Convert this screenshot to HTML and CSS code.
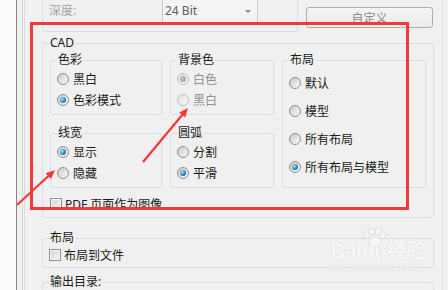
FILE: index.html
```html
<!DOCTYPE html>
<html lang="zh-CN">

  <head>
    <meta charset="UTF-8">
    <meta name="viewport" content="width=device-width, initial-scale=1.0">
    <title>输出选项</title>
    <link rel="stylesheet" href="styles.css">
  </head>

  <body>
    <div class="side"></div>

    <div class="content">
      <div class="frame">
        <div class="top-row">
          <div class="depth-box">
            <span class="depth-label">深度:</span>
            <div class="select">
              <span>24 Bit</span>
              <span class="caret"></span>
            </div>
          </div>
          <button class="btn" disabled>自定义</button>
        </div>

        <fieldset class="group cad">
          <legend>CAD</legend>
          <div class="cad-grid">
            <fieldset class="group">
              <legend>色彩</legend>
              <label class="opt"><span class="radio"></span>黑白</label>
              <label class="opt"><span class="radio on"></span>色彩模式</label>
            </fieldset>

            <fieldset class="group">
              <legend>背景色</legend>
              <label class="opt disabled"><span class="radio on"></span>白色</label>
              <label class="opt disabled"><span class="radio"></span>黑白</label>
            </fieldset>

            <fieldset class="group layout">
              <legend>布局</legend>
              <label class="opt tall"><span class="radio"></span>默认</label>
              <label class="opt tall"><span class="radio"></span>模型</label>
              <label class="opt tall"><span class="radio"></span>所有布局</label>
              <label class="opt tall"><span class="radio on"></span>所有布局与模型</label>
            </fieldset>

            <fieldset class="group">
              <legend>线宽</legend>
              <label class="opt"><span class="radio on"></span>显示</label>
              <label class="opt"><span class="radio"></span>隐藏</label>
            </fieldset>

            <fieldset class="group">
              <legend>圆弧</legend>
              <label class="opt"><span class="radio"></span>分割</label>
              <label class="opt"><span class="radio on"></span>平滑</label>
            </fieldset>
          </div>

          <label class="opt check-row"><span class="check"></span>PDF 页面作为图像</label>
        </fieldset>

        <fieldset class="group sheet">
          <legend>布局</legend>
          <label class="opt check-row"><span class="check"></span>布局到文件</label>
        </fieldset>

        <fieldset class="group output">
          <legend>输出目录:</legend>
        </fieldset>
      </div>
    </div>

    <!-- watermark of the source site -->
    <div class="watermark">
      <svg class="paw" width="26" height="20" viewBox="0 0 26 20">
        <ellipse cx="6" cy="7" rx="3" ry="3.5"/>
        <ellipse cx="11" cy="3.5" rx="3" ry="3.5"/>
        <ellipse cx="17" cy="3.5" rx="3" ry="3.5"/>
        <ellipse cx="22" cy="7" rx="3" ry="3.5"/>
        <ellipse cx="14" cy="14" rx="6" ry="5"/>
      </svg>
      <div class="wm-logo">Baidu经验</div>
      <div class="wm-url">jingyan.baidu.com</div>
    </div>

    <!-- red annotation drawn over the dialog -->
    <svg class="marks" width="448" height="290" viewBox="0 0 448 290">
      <rect x="31.5" y="23.5" width="376" height="185" fill="none" stroke="#f03a3a" stroke-width="3"/>
      <line x1="17" y1="205" x2="49" y2="175.5" stroke="#f03a3a" stroke-width="2.2"/>
      <polygon points="55,170 51.1,179 45.7,173.2" fill="#f03a3a"/>
      <line x1="143" y1="162" x2="183" y2="114" stroke="#f03a3a" stroke-width="2.2"/>
      <polygon points="188,108 185.3,117.5 179.2,112.4" fill="#f03a3a"/>
    </svg>
  </body>

</html>
```

FILE: styles.css
```css
/* Windows 7 style option panel */
body {
  margin: 0;
  width: 448px;
  height: 290px;
  overflow: hidden;
  display: flex;
  background-color: #f0f0f0;
  color: #1a1a1a;
  font-family: "Noto Sans", "Noto Sans CJK SC", sans-serif;
  font-size: 12px;
  position: relative;
}

.side {
  width: 16px;
  flex-shrink: 0;
  background-color: #fbfbfb;
  border-right: 1px solid #858585;
}

.content {
  padding-left: 5px;
}

.frame {
  width: 400px;
  height: 300px;
  border-left: 3px double #dcdcdc;
  border-right: 1px solid #dcdcdc;
  padding-left: 17px;
  padding-right: 0;
}

/* top row: depth + custom button */
.top-row {
  display: flex;
  align-items: flex-start;
  height: 32px;
}

.depth-box {
  width: 256px;
  height: 32px;
  box-sizing: border-box;
  border: 1px solid #d5dfe5;
  border-top: none;
  border-radius: 0 0 3px 3px;
  padding-left: 6px;
  display: flex;
  align-items: flex-start;
}

.depth-label {
  width: 113px;
  line-height: 22px;
  color: #a3a3a3;
}

.select {
  width: 96px;
  height: 23px;
  box-sizing: border-box;
  border: 1px solid #c9c9c9;
  border-top: none;
  border-radius: 0 0 2px 2px;
  background-color: #f4f4f4;
  padding-left: 2px;
  line-height: 22px;
  color: #5e5e5e;
  display: flex;
  justify-content: space-between;
  align-items: center;
}

.caret {
  width: 0;
  height: 0;
  margin-right: 6px;
  border-left: 3px solid transparent;
  border-right: 3px solid transparent;
  border-top: 3px solid #8d8d8d;
}

.btn {
  margin-left: 8px;
  margin-top: 7px;
  width: 127px;
  height: 21px;
  border: 1px solid #adadad;
  border-radius: 3px;
  background: linear-gradient(#f4f4f4, #ececec);
  color: #8a8a8a;
  font-family: inherit;
  font-size: 12px;
  padding: 0;
}

/* group boxes */
.group {
  margin: 0;
  padding: 0 0 4px 6px;
  min-width: 0;
  border: 1px solid #d5dfe5;
  border-radius: 3px;
}

.group legend {
  padding: 0 1px;
  line-height: 16px;
}

.cad {
  width: 392px;
  box-sizing: border-box;
  margin-top: 3px;
  padding: 0 7px 4px 7px;
}

.cad > legend {
  margin-left: -1px;
}

.cad-grid {
  margin-top: 1px;
  display: grid;
  grid-template-columns: 112px 104px 144px;
  column-gap: 8px;
  row-gap: 10px;
}

.layout {
  grid-row: span 2;
  padding-top: 1px;
}

.opt {
  display: flex;
  align-items: center;
  height: 21px;
  white-space: nowrap;
}

.opt.tall {
  height: 28px;
}

.opt.disabled {
  color: #8f8f8f;
}

.radio {
  width: 12px;
  height: 12px;
  box-sizing: border-box;
  margin-right: 4px;
  border-radius: 50%;
  border: 1px solid #8e8f8f;
  background: linear-gradient(135deg, #c9c9c9, #fbfbfb);
  display: flex;
  align-items: center;
  justify-content: center;
  flex-shrink: 0;
}

.radio.on::after {
  content: "";
  width: 6px;
  height: 6px;
  border-radius: 50%;
  background: radial-gradient(circle at 35% 35%, #a4e6ff, #1f7bbd 60%, #0d4a7a);
}

.disabled .radio {
  border-color: #bdbdbd;
  background: linear-gradient(135deg, #e0e0e0, #fafafa);
}

.disabled .radio.on::after {
  background: radial-gradient(circle at 40% 40%, #c8c8c8, #8c8c8c);
}

.check-row {
  height: 18px;
  margin-top: 7px;
}

.check {
  width: 12px;
  height: 12px;
  box-sizing: border-box;
  margin-right: 3px;
  border: 1px solid #8e8f8f;
  background: linear-gradient(135deg, #d6d6d6, #f4f4f4);
  box-shadow: inset 0 0 0 1px #f6f6f6;
  flex-shrink: 0;
}

.sheet {
  width: 392px;
  box-sizing: border-box;
  margin-top: 12px;
  padding-bottom: 3px;
}

.sheet .check-row {
  margin-top: 0;
}

.output {
  width: 392px;
  height: 30px;
  box-sizing: border-box;
  margin-top: 7px;
}

.output legend {
  line-height: 14px;
}

/* watermark */
.watermark {
  position: absolute;
  left: 331px;
  top: 228px;
  width: 110px;
  white-space: nowrap;
  color: #f7f7f7;
  text-shadow: 0 0 1px #d0d0d0;
  pointer-events: none;
}

.paw {
  display: block;
  margin-left: 30px;
  fill: #f7f7f7;
  stroke: #d8d8d8;
  stroke-width: 0.8;
}

.wm-logo {
  margin-top: -8px;
  font-family: "Liberation Sans", "Noto Sans CJK SC", sans-serif;
  font-size: 20px;
  font-weight: bold;
  line-height: 22px;
}

.wm-url {
  font-family: "Liberation Sans", sans-serif;
  font-size: 10px;
  line-height: 12px;
  letter-spacing: 0.5px;
}

.marks {
  position: absolute;
  left: 0;
  top: 0;
  pointer-events: none;
}
```
